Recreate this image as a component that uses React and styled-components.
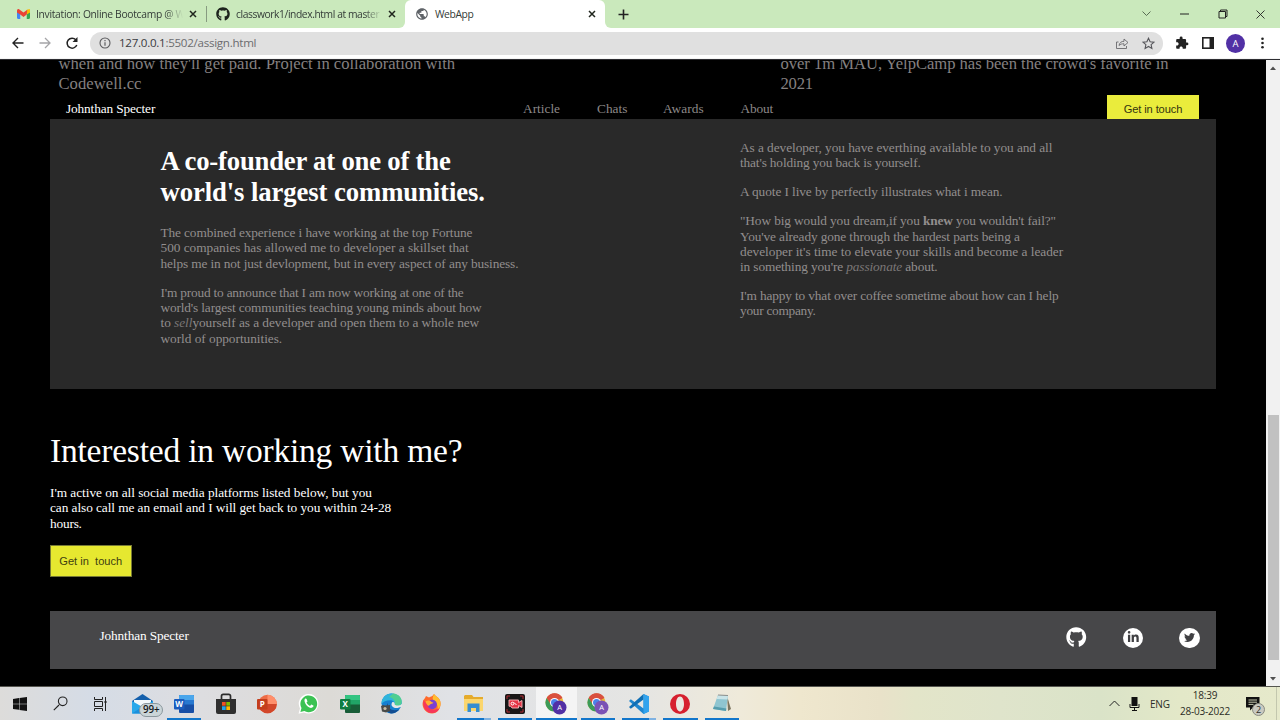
import React from 'react';
import styled, { createGlobalStyle } from 'styled-components';
import { FaGithub, FaLinkedinIn, FaTwitter } from 'react-icons/fa';
import { MdExtension, MdPublic } from 'react-icons/md';

const Global = createGlobalStyle`
  *, *::before, *::after { box-sizing: border-box; }
  body { margin: 0; width: 1280px; height: 720px; overflow: hidden; background: #000; }
  p, h1, h2 { margin: 0; }
  svg { display: block; flex: none; }
`;

const Screen = styled.div`
  width: 1280px;
  height: 720px;
  display: flex;
  flex-direction: column;
  overflow: hidden;
  font-family: 'Open Sans', 'Noto Sans', sans-serif;
`;

/* ---------- browser chrome ---------- */
const TabStrip = styled.div`
  height: 28px;
  display: flex;
  flex: none;
  background: #fff;
`;
const TabSide = styled.div`
  display: flex;
  align-items: center;
  background: #cae9bc;
  width: ${(p) => p.$w}px;
  flex: ${(p) => (p.$w ? 'none' : 1)};
  border-radius: ${(p) => p.$radius};
`;
const Tab = styled.div`
  display: flex;
  align-items: center;
  width: ${(p) => p.$w}px;
  height: 28px;
  flex: none;
  padding-left: ${(p) => p.$pad}px;
  gap: 6px;
`;
const ActiveTabWrap = styled.div`
  background: #cae9bc;
  flex: none;
`;
const ActiveTab = styled(Tab)`
  background: #fff;
  border-radius: 6px 6px 0 0;
`;
const TabTitle = styled.span`
  width: ${(p) => p.$w}px;
  white-space: nowrap;
  font-size: 10.3px;
  line-height: 14px;
  letter-spacing: ${(p) => p.$ls || 0}px;
  color: #343c38;
  mask-image: ${(p) => (p.$fade ? 'linear-gradient(90deg, #000 88%, transparent)' : 'none')};
`;
const TabDivider = styled.i`
  width: 1px;
  height: 16px;
  background: #879b80;
  margin-left: 3px;
`;
const WindowButtons = styled.div`
  display: flex;
  align-items: center;
  margin-left: auto;
  height: 25px;
`;
const WinBtn = styled.span`
  width: 38.2px;
  display: flex;
  justify-content: center;
`;
const Toolbar = styled.div`
  height: 31px;
  flex: none;
  display: flex;
  align-items: center;
  background: #fff;
  padding: 0 11px 0 11px;
  border-bottom: 1px solid #f4f4f4;
`;
const NavIcons = styled.div`
  display: flex;
  gap: 13px;
  width: 79px;
`;
const AddressBar = styled.div`
  width: 1073px;
  height: 23px;
  border-radius: 12px;
  background: #e0e0e0;
  display: flex;
  align-items: center;
  padding: 0 8px 0 9px;
  color: #6c6c6f;
  font-size: 11.6px;
  line-height: 20px;
  letter-spacing: ${(p) => p.$ls}px;
`;
const Url = styled.span`
  margin-left: 8px;
  flex: 1;
  white-space: nowrap;
  b { font-weight: 400; color: #3b3b40; }
`;
const AddressActions = styled.span`
  display: flex;
  gap: 13px;
`;
const ToolbarRight = styled.div`
  flex: none;
  display: flex;
  align-items: center;
  padding-left: 12px;
  gap: 12.5px;
`;
const Avatar = styled.span`
  width: 19px;
  height: 19px;
  border-radius: 50%;
  background: #5130a5;
  color: #fff;
  font-size: 9.5px;
  line-height: 19px;
  text-align: center;
  margin-right: 2px;
`;

/* ---------- web page ---------- */
const Viewport = styled.div`
  flex: 1;
  display: flex;
  min-height: 0;
  background: #000;
  border-top: 1px solid #2d2d31;
`;
const Page = styled.main`
  width: 1266px;
  padding-left: 50px;
  padding-right: 50px;
  font-family: 'Liberation Serif', 'Times New Roman', serif;
  font-size: 13.33px;
  line-height: 15.4px;
  color: #fff;
  overflow: hidden;
`;
const Projects = styled.section`
  display: grid;
  grid-template-columns: 722px 1fr;
  padding-left: 8.5px;
  margin-top: -6px;
  height: 41px;
  font-size: 16.6px;
  line-height: 20px;
  color: #858181;
`;
const Line = styled.span`
  display: block;
  white-space: pre;
  letter-spacing: ${(p) => p.$ls || 0}px;
`;
const Navbar = styled.nav`
  height: 24px;
  display: flex;
  padding-left: 16px;
  padding-right: 17px;
`;
const Brand = styled.span`
  width: ${(p) => p.$w}px;
  padding-top: ${(p) => p.$top || 0}px;
  white-space: nowrap;
  letter-spacing: -0.14px;
`;
const NavLink = styled.a`
  width: ${(p) => p.$w}px;
  padding-top: 6px;
  color: #8c8888;
  white-space: nowrap;
  letter-spacing: ${(p) => p.$ls || 0}px;
`;
const NavButton = styled.button`
  width: 92px;
  height: 24px;
  margin-left: auto;
  padding: 4px 0 0;
  border: 0;
  background: #eaec3c;
  color: #33340f;
  font: 11.1px 'Liberation Sans', Arial, sans-serif;
  letter-spacing: -0.12px;
`;
const About = styled.section`
  height: 270px;
  background: #292929;
  display: grid;
  grid-template-columns: 579.5px 1fr;
  padding-left: 110.5px;
  color: #928e8e;
`;
const Column = styled.div`
  padding-top: ${(p) => p.$top}px;
`;
const Title = styled.h1`
  color: #fff;
  font-size: 26.7px;
  line-height: 31px;
  font-weight: 700;
  margin-bottom: 17px;
`;
const Para = styled.p`
  line-height: 15.33px;
  margin-bottom: 13.6px;
  em { color: #7b7777; }
`;
const Contact = styled.section`
  height: 222px;
  padding-top: 43px;
`;
const ContactTitle = styled.h2`
  font-size: 33.5px;
  line-height: 38px;
  font-weight: 400;
  margin-bottom: 15px;
`;
const ContactButton = styled.button`
  display: block;
  margin-top: 14px;
  width: 81.5px;
  height: 32px;
  padding: 0;
  border: 1.5px solid #777a35;
  background: #e6e830;
  color: #3e4010;
  font: 11.1px 'Liberation Sans', Arial, sans-serif;
  white-space: pre;
`;
const Footer = styled.footer`
  height: 58px;
  background: #474749;
  display: flex;
  justify-content: space-between;
  padding: 16.5px 16.5px 0 49.5px;
`;
const Socials = styled.div`
  display: flex;
  gap: 36.1px;
`;
const Social = styled.span`
  width: 20.4px;
  height: 20.4px;
  display: flex;
  align-items: center;
  justify-content: center;
  border-radius: 50%;
  background: ${(p) => (p.$plain ? 'transparent' : '#fff')};
  color: ${(p) => (p.$plain ? '#fff' : '#3f3f42')};
`;
const Scrollbar = styled.aside`
  width: 14px;
  background: #f1f1f1;
  display: flex;
  flex-direction: column;
  align-items: center;
  padding: 6px 0 5px;
`;
const Thumb = styled.div`
  width: 11px;
  height: 245px;
  margin-top: auto;
  margin-bottom: 17px;
  background: #c1c1c1;
`;

/* ---------- taskbar ---------- */
const Taskbar = styled.div`
  height: 34px;
  flex: none;
  display: flex;
  border-top: 1px solid #55554f;
  background: linear-gradient(90deg, #dddcda 0, #d5dce6 90px, #dddde0 200px, #dcdad6 330px, #e0e2e6 450px, #e5e5e3 640px, #efeada 740px, #efe7ce 800px, #e9e2c9 880px, #e3e5c9 915px, #dfe4cb 1000px, #dae3c8 1100px, #e3e8c8 1180px, #e6e9cb 1280px);
`;
const TaskCell = styled.div`
  position: relative;
  width: ${(p) => p.$w || 41.35}px;
  margin-right: ${(p) => p.$after || 0}px;
  flex: none;
  display: flex;
  align-items: center;
  justify-content: center;
  background: ${(p) => (p.$active ? 'rgba(255,255,255,.6)' : 'transparent')};
`;
const Underline = styled.i`
  position: absolute;
  bottom: 0;
  left: ${(p) => (p.$full ? 0 : 3.5)}px;
  right: ${(p) => (p.$full ? 0 : 3.5)}px;
  height: 2px;
  background: ${(p) => (p.$stack ? 'linear-gradient(90deg, #1276cb 80%, #7fb2e2 80%)' : '#1276cb')};
`;
const CountBadge = styled.span`
  position: absolute;
  left: 17px;
  top: 16px;
  width: 24px;
  height: 14px;
  border: 1px solid #8b979d;
  border-radius: 7px;
  background: #cbd5d8;
  color: #15191c;
  font-size: 9.8px;
  font-weight: 600;
  line-height: 12px;
  text-align: center;
`;
const Tray = styled.div`
  margin-left: auto;
  width: 171px;
  display: flex;
  align-items: center;
  color: #2c2d26;
  font-size: 10px;
`;
const Mic = styled.svg`
  margin-left: 8px;
`;
const Lang = styled.span`
  margin-left: 9px;
  width: 20px;
  letter-spacing: -0.2px;
`;
const Clock = styled.div`
  width: 51px;
  margin-left: 9.5px;
  line-height: 15.4px;
  text-align: center;
  white-space: nowrap;
  letter-spacing: -0.2px;
`;
const Notice = styled.div`
  position: relative;
  margin-left: 15.5px;
  width: 22px;
  height: 14px;
`;
const NoticeCount = styled.span`
  position: absolute;
  left: 6px;
  top: 6px;
  width: 13px;
  height: 13px;
  border: 1px solid #8a8b80;
  border-radius: 50%;
  background: #c9cac2;
  font-size: 9px;
  line-height: 11px;
  text-align: center;
`;
const DesktopEdge = styled.i`
  width: 1px;
  height: 100%;
  margin: 0 3px 0 auto;
  background: #c3c7ae;
`;

/* ---------- drawings ---------- */
const Stroke = ({ w = 12, h = w, vb = `0 0 ${w} ${h}`, d, c = '#222', sw = 1.2 }) => (
  <svg width={w} height={h} viewBox={vb} fill="none" stroke={c} strokeWidth={sw}><path d={d} /></svg>
);
const Close = () => <Stroke w={8} d="M1 1l6 6M7 1l-6 6" sw={1.5} c="#20261e" />;
const Gmail = () => (
  <svg width="13" height="10" viewBox="0 0 24 18">
    <path d="M0 3v13a2 2 0 0 0 2 2h4V7z" fill="#4285f4" />
    <path d="M24 3v13a2 2 0 0 1-2 2h-4V7z" fill="#34a853" />
    <path d="M18 1l4-1a2 2 0 0 1 2 3v3l-6 4z" fill="#fbbc04" />
    <path d="M0 6V3C0 0 3-1 5 1l7 5 7-5-1 9-6 4.500L6 10z" fill="#ea4335" />
  </svg>
);
const Windows = () => (
  <svg width="14" height="14" viewBox="0 0 14 14" fill="#111"><path d="M0 2l6-.9v5.600H0zM6.500 1L14 0v6.700H6.500zM0 7.200h6v5.600L0 12zM6.500 7.200H14V14l-7.500-1z" /></svg>
);
const Mail = () => (
  <svg width="21" height="20" viewBox="0 0 21 20">
    <path d="M0 7L10.500 0 21 7v12H0z" fill="#1560ac" />
    <path d="M2 6h17v8H2z" fill="#f3f8fb" />
    <path d="M0 7l10.500 6L21 7v12.500H0z" fill="#28a8ea" />
    <path d="M0 19.500L13 11l8 8.500z" fill="#1b8fdc" />
  </svg>
);
const Office = ({ letter, base, mid, light, tile, round }) => (
  <svg width="20" height="20" viewBox="0 0 20 20">
    {round ? (
      <g><circle cx="10.500" cy="10" r="9.300" fill={base} /><path d="M10.500.7A9.300 9.300 0 0 1 19.800 10h-9.300z" fill={light} /><path d="M1.200 10h18.600a9.300 9.300 0 0 1-18.600 0z" fill={mid} /></g>
    ) : (
      <g><rect x="5" y="1" width="15" height="18" rx="1" fill={base} /><path d="M5 2a1 1 0 0 1 1-1h13a1 1 0 0 1 1 1v4H5z" fill={light} /><path d="M5 6h15v4.500H5z" fill={mid} /></g>
    )}
    <rect x="0" y="5" width="10.500" height="10.500" rx="1" fill={tile} />
    <text x="5.200" y="13.200" fontSize="8" fontWeight="700" fill="#fff" textAnchor="middle" fontFamily="Open Sans, sans-serif">{letter}</text>
  </svg>
);
const Store = () => (
  <svg width="20" height="21" viewBox="0 0 20 21">
    <path d="M5.500 7V3a1.700 1.700 0 0 1 1.700-1.700h5.600A1.700 1.700 0 0 1 14.500 3v4" fill="none" stroke="#2b2b2b" strokeWidth="1.700" />
    <path d="M0 6h20v13a2 2 0 0 1-2 2H2a2 2 0 0 1-2-2z" fill="#2f2f2f" />
    <path d="M6 9h3.700v3.700H6z" fill="#f05022" /><path d="M10.300 9H14v3.700h-3.700z" fill="#7fba00" />
    <path d="M6 13.300h3.700V17H6z" fill="#20a4ee" /><path d="M10.300 13.300H14V17h-3.700z" fill="#ffb902" />
  </svg>
);
const WhatsApp = () => (
  <svg width="21" height="21" viewBox="0 0 21 21">
    <path d="M.5 20.800l1.500-5.300A9.800 9.800 0 1 1 6 19.400z" fill="#fff" />
    <path d="M2.400 19l1.100-3.900A8.400 8.400 0 1 1 6.300 18z" fill="#3bc253" />
    <path d="M7.300 5.500c-3 2 2.500 10.500 6.500 9.300 2-.7 1.800-2 1.500-2.200l-2-1-1.300 1.300c-1.600-.6-2.800-1.700-3.500-3.300l1-1.200-.9-2.400c-.2-.5-.9-.7-1.300-.5z" fill="#fff" />
  </svg>
);
const Edge = () => (
  <svg width="21" height="21" viewBox="0 0 21 21">
    <circle cx="10.500" cy="10.500" r="10" fill="#1680d0" />
    <path d="M.6 9C2 2 7 .3 11 .5c6 .3 9.800 4.500 9.700 8.500-.2 4.500-5.500 5.500-7.200 3.500 1-3-1.500-5.200-4-5.200C5 7.300 2 9 .6 11z" fill="#2fb4dc" />
    <path d="M12 .5c6 .5 9 4.500 8.700 8.500-.2 4.500-5.500 5.500-7.200 3.500C15 9 13 5 8 4z" fill="#4fce93" />
    <path d="M7 10c-1 5 4 9 11 6.500-2 2.800-5 4-8 4C6 20 4 14 7 10z" fill="#134d91" />
    <path d="M11.500 9c-2.500 3 0 6.500 5 6l4.500-1.500V11c-2 1.800-6 2-7.200.8C14 10 13 8.500 11.500 9z" fill="#e4e7e8" />
    <path d="M0 13l2-1 2 .5 5-.5v6l-4 1.500-4-1z" fill="#494b49" /><circle cx="4" cy="15.500" r="1.600" fill="#c9bda5" />
  </svg>
);
const Firefox = () => (
  <svg width="20" height="20" viewBox="0 0 20 20">
    <path d="M3 4l1-2 3 1.500C9 2.500 11 2 12 0c1 2 4 3 5.500 5.500 3 5-.5 14-7.500 14C3 19.500-1.500 12 1.500 6z" fill="#ff6a2b" />
    <path d="M12 0c1 2 4 3 5.500 5.500 2 4 1 8-2 11 1-5-1-8-4-10C10 5 11 2 12 0z" fill="#ffbd2e" />
    <path d="M1.500 6c-1.300 6 2 13 8 13 4 0 7-2 8-5-4 3-10 2-12-3z" fill="#f7375a" />
    <circle cx="10.300" cy="10.500" r="4.700" fill="#7b3fd0" />
    <path d="M3.500 7.500c2-1.500 5-1 6 .5l2 .8c-1 1.400-3 .8-4 2.200-.5 2-3 0-4-3.500z" fill="#ffae32" />
  </svg>
);
const Folder = () => (
  <svg width="19" height="17" viewBox="0 0 19 17">
    <path d="M1 0h7l1.500 2H19v14H0V1z" fill="#e5ab2c" /><path d="M0 4h19v12H0z" fill="#fbd66d" />
    <path d="M3.500 17V8.500h12V17H12v-4H7v4z" fill="#368dd0" />
  </svg>
);
const Recorder = () => (
  <svg width="20" height="20" viewBox="0 0 20 20">
    <rect width="20" height="20" rx="2" fill="#181717" />
    <path d="M2 5V2h3M15 2h3v3M18 15v3h-3M5 18H2v-3" fill="none" stroke="#b02a33" strokeWidth="1" />
    <path d="M4 6h9.500v2.500L17 6.500v7l-3.500-2V14H7l-1.300-1.800H4z" fill="#e33647" stroke="#f8b8bc" strokeWidth=".9" />
    <circle cx="7.500" cy="9.600" r="1.400" fill="none" stroke="#fff" /><path d="M9 8.500l2.500 2.500" stroke="#fff" />
  </svg>
);
const Chrome = ({ badge = '#5130a5' }) => (
  <svg width="22" height="22" viewBox="0 0 22 22">
    <circle cx="9.500" cy="9.500" r="9" fill="#e9b93c" />
    <path d="M9.500 9.500L1.700 5A9 9 0 0 1 17.300 5z" fill="#d9503f" /><path d="M9.500 5h8a9 9 0 0 0-15.800 0l4 7z" fill="#d9503f" />
    <path d="M1.700 5a9 9 0 0 0 7.800 13.500l3.500-6-7-.5z" fill="#3c9b58" />
    <circle cx="9.500" cy="9.500" r="4.500" fill="#fff" /><circle cx="9.500" cy="9.500" r="3.500" fill="#4a83ea" />
    <circle cx="14.500" cy="14.500" r="7" fill={badge} />
    <text x="14.500" y="17.200" fontSize="7.500" fill="#fff" textAnchor="middle" fontFamily="Open Sans, sans-serif">A</text>
  </svg>
);
const VSCode = () => (
  <svg width="20" height="20" viewBox="0 0 20 20">
    <path d="M14.500 0L20 2.500v15L14.500 20 0 7l1.800-1.800L14.500 14.500z" fill="#1f86cf" />
    <path d="M14.500 0v5.500L1.800 14.800 0 13z" fill="#0f6fb5" /><path d="M14.500 0L20 2.500v15L14.500 20z" fill="#31a3ee" />
  </svg>
);
const Opera = () => (
  <svg width="20" height="20" viewBox="0 0 20 20"><path fillRule="evenodd" d="M10 0a10 10 0 1 1 0 20 10 10 0 0 1 0-20zm0 2.600c-2.500 0-4 3.400-4 7.400s1.500 7.400 4 7.400 4-3.400 4-7.400-1.500-7.400-4-7.400z" fill="#d6202e" /></svg>
);
const Notepad = () => (
  <svg width="20" height="19" viewBox="0 0 20 19">
    <path d="M15 2l4 13-3 2z" fill="#7c755f" /><path d="M6 1l10 .5L14 17 1 15z" fill="#8fc5d0" /><path d="M6 1l10 .5-.5 4L4.500 5z" fill="#c9e4e8" /><path d="M1 15l13 2 .4-2.500L2 12.500z" fill="#569dad" />
    <path d="M6 1l10 .5" stroke="#8d8f8c" strokeWidth="1.200" />
  </svg>
);

const tasks = [
  { icon: <Mail />, count: '99+' },
  { icon: <Office letter="W" base="#174ea6" mid="#2878d0" light="#4aa6ec" tile="#1b5cbe" />, open: true },
  { icon: <Store /> },
  { icon: <Office round letter="P" base="#ed6c47" mid="#d2472a" light="#ff8f6b" tile="#c43e1c" /> },
  { icon: <WhatsApp /> },
  { icon: <Office letter="X" base="#185c37" mid="#21a366" light="#33c481" tile="#107c41" /> },
  { icon: <Edge /> },
  { icon: <Firefox /> },
  { icon: <Folder />, open: true, stack: true },
  { icon: <Recorder />, open: true },
  { icon: <Chrome />, open: true, active: true },
  { icon: <Chrome badge="#7a52b5" />, open: true },
  { icon: <VSCode />, open: true, stack: true },
  { icon: <Opera />, open: true },
  { icon: <Notepad />, open: true },
];

const Browser = () => (
  <>
    <TabStrip>
      <TabSide $w={405} $radius="0 0 6px 0">
        <Tab $w={207} $pad={17}>
          <Gmail /><TabTitle $w={147} $fade $ls={-0.3}>Invitation: Online Bootcamp @ W</TabTitle><Close /><TabDivider />
        </Tab>
        <Tab $w={198} $pad={9}>
          <FaGithub size={14} color="#1d241d" /><TabTitle $w={146} $fade $ls={-0.42}>classwork1/index.html at master</TabTitle><Close />
        </Tab>
      </TabSide>
      <ActiveTabWrap>
        <ActiveTab $w={200} $pad={10}>
          <MdPublic size={14} color="#5f6368" /><TabTitle $w={147} $ls={-0.4}>WebApp</TabTitle><Close />
        </ActiveTab>
      </ActiveTabWrap>
      <TabSide $radius="0 0 0 6px">
        <Tab $w={40} $pad={13}><Stroke w={11} d="M5.500.5v10M.5 5.500h10" sw={1.6} /></Tab>
        <WindowButtons>
          <WinBtn><Stroke w={9} h={6} d="M.5.5l4 4 4-4" sw={0.9} c="#4c5f48" /></WinBtn>
          <WinBtn><Stroke w={9} h={2} d="M0 1h9" sw={1} /></WinBtn>
          <WinBtn><Stroke w={10} d="M1 2.500h6.500V9H1zM2.500 2.500V1H9v6.500H7.500" sw={1} /></WinBtn>
          <WinBtn><Stroke w={9} d="M.5.5l8 8M8.500.5l-8 8" sw={0.9} /></WinBtn>
        </WindowButtons>
      </TabSide>
    </TabStrip>
    <Toolbar>
      <NavIcons>
        <Stroke w={14} d="M12.500 7H2M7 2L2 7l5 5" sw={1.4} />
        <Stroke w={14} d="M1.500 7H12M7 2l5 5-5 5" sw={1.3} c="#a5a5a8" />
        <svg width="14" height="14" viewBox="0 0 14 14"><path d="M11.800 9a5 5 0 1 1-1-5.300" fill="none" stroke="#222" strokeWidth="1.500" /><path d="M12.500 1v5h-5z" fill="#222" /></svg>
      </NavIcons>
      <AddressBar $ls={-0.28}>
        <svg width="12" height="12" viewBox="0 0 12 12" fill="none" stroke="#5c5c5f"><circle cx="6" cy="6" r="5" strokeWidth="1.100" /><path d="M6 5.200v3.500M6 3v1.200" strokeWidth="1.200" /></svg>
        <Url><b>127.0.0.1</b>:5502/assign.html</Url>
        <AddressActions>
          <Stroke w={14} h={13} d="M3.500 5H1.500v6.500h10V9M4 8.500c.5-3 2.500-4.200 5-4.200V2L13 5.500 9 9V6.800C7 6.800 5.500 7 4 8.500z" sw={0.9} c="#6a6a6d" />
          <Stroke w={13} h={13} d="M6.500 1.200l1.600 3.500 3.900.4-2.900 2.600.8 3.800-3.400-2-3.400 2 .8-3.800L1 5.100l3.900-.4z" sw={1.1} c="#55555a" />
        </AddressActions>
      </AddressBar>
      <ToolbarRight>
        <MdExtension size={14} color="#222" />
        <svg width="12" height="12" viewBox="0 0 12 12"><rect x=".8" y=".8" width="10.400" height="10.400" fill="none" stroke="#222" strokeWidth="1.600" /><path d="M7.500 1H11v10H7.500z" fill="#222" /></svg>
        <Avatar>A</Avatar>
        <svg width="5" height="12" viewBox="0 0 5 12" fill="#222"><circle cx="2.500" cy="1.700" r="1.300" /><circle cx="2.500" cy="6" r="1.300" /><circle cx="2.500" cy="10.300" r="1.300" /></svg>
      </ToolbarRight>
    </Toolbar>
  </>
);

const Site = () => (
  <Viewport>
    <Page>
      <Projects>
        <div>
          <Line>when and how they'll get paid. Project in collaboration with</Line>
          <Line $ls={0.05}>Codewell.cc</Line>
        </div>
        <div>
          <Line $ls={-0.03}>over 1m MAU, YelpCamp has been the crowd's favorite in</Line>
          <Line $ls={-0.2}>2021</Line>
        </div>
      </Projects>
      <Navbar>
        <Brand $w={457} $top={6}>Johnthan Specter</Brand>
        <NavLink $w={74}>Article</NavLink>
        <NavLink $w={66}>Chats</NavLink>
        <NavLink $w={77.5} $ls={0.1}>Awards</NavLink>
        <NavLink $w={60} $ls={-0.15}>About</NavLink>
        <NavButton>Get in touch</NavButton>
      </Navbar>
      <About>
        <Column $top={27}>
          <Title>
            <Line $ls={-0.2}>A co-founder at one of the</Line>
            <Line $ls={-0.09}>world's largest communities.</Line>
          </Title>
          <Para>
            <Line $ls={-0.12}>The combined experience i have working at the top Fortune</Line>
            <Line $ls={-0.03}>500 companies has allowed me to developer a skillset that</Line>
            <Line $ls={-0.125}>helps me in not just devlopment, but in every aspect of any business.</Line>
          </Para>
          <Para>
            <Line $ls={-0.195}>I'm proud to announce that I am now working at one of the</Line>
            <Line $ls={-0.15}>world's largest communities teaching young minds about how</Line>
            <Line $ls={-0.05}>to <em>sell</em>yourself as a developer and open them to a whole new</Line>
            <Line $ls={-0.04}>world of opportunities.</Line>
          </Para>
        </Column>
        <Column $top={21}>
          <Para>
            <Line $ls={-0.06}>As a developer, you have everthing available to you and all</Line>
            <Line $ls={-0.15}>that's holding you back is yourself.</Line>
          </Para>
          <Para><Line $ls={-0.09}>A quote I live by perfectly illustrates what i mean.</Line></Para>
          <Para>
            <Line $ls={-0.11}>"How big would you dream,if you <b>knew</b> you wouldn't fail?"</Line>
            <Line $ls={-0.12}>You've already gone through the hardest parts being a</Line>
            <Line $ls={-0.02}>developer it's time to elevate your skills and become a leader</Line>
            <Line $ls={-0.12}>in something you're <em>passionate</em> about.</Line>
          </Para>
          <Para>
            <Line $ls={-0.14}>I'm happy to vhat over coffee sometime about how can I help</Line>
            <Line $ls={-0.27}>your company.</Line>
          </Para>
        </Column>
      </About>
      <Contact>
        <ContactTitle><Line $ls={-0.21}>Interested in working with me?</Line></ContactTitle>
        <Line $ls={-0.045}>I'm active on all social media platforms listed below, but you</Line>
        <Line $ls={-0.07}>can also call me an email and I will get back to you within 24-28</Line>
        <Line $ls={-0.2}>hours.</Line>
        <ContactButton>Get in  touch</ContactButton>
      </Contact>
      <Footer>
        <Brand>Johnthan Specter</Brand>
        <Socials>
          <Social $plain><FaGithub size={20.5} /></Social>
          <Social><FaLinkedinIn size={12.5} /></Social>
          <Social><FaTwitter size={11} /></Social>
        </Socials>
      </Footer>
    </Page>
    <Scrollbar>
      <svg width="6" height="4" viewBox="0 0 6 4"><path d="M0 4l3-3.500L6 4z" fill="#505050" /></svg>
      <Thumb />
      <svg width="6" height="4" viewBox="0 0 6 4"><path d="M0 0l3 3.500L6 0z" fill="#505050" /></svg>
    </Scrollbar>
  </Viewport>
);

export default function App() {
  return (
    <Screen>
      <Global />
      <Browser />
      <Site />
      <Taskbar>
        <TaskCell $w={40}><Windows /></TaskCell>
        <TaskCell $w={40}><Stroke w={15} d="M6 9L.8 14.200M14 5.300a4.300 4.300 0 1 1-8.600 0 4.300 4.300 0 0 1 8.600 0z" sw={1.1} /></TaskCell>
        <TaskCell $w={40} $after={2.3}><Stroke w={15} h={14} d="M1.500 0v2.500h8V0M1.500 4.500h8v5h-8zM1.500 14v-2.500h8V14M12.500 0v14M11 5h3" sw={1} /></TaskCell>
        {tasks.map((t, i) => (
          <TaskCell key={i} $active={t.active}>
            {t.icon}
            {t.count && <CountBadge>{t.count}</CountBadge>}
            {t.open && <Underline $full={t.active} $stack={t.stack} />}
          </TaskCell>
        ))}
        <Tray>
          <Stroke w={11} h={7} d="M.5 6l5-5 5 5" sw={1} />
          <Mic width="13" height="14" viewBox="-5.500 0 13 14"><rect x="-2" y="0" width="6" height="9" fill="#111" /><path d="M-3.500 7v3.500h9V7M1 10.500V13M-1.500 13.500h5" fill="none" stroke="#111" /></Mic>
          <Lang>ENG</Lang>
          <Clock>18:39<br />28-03-2022</Clock>
          <Notice>
            <svg width="14" height="14" viewBox="0 0 14 14"><path d="M0 0h13.500v10.500H7L4 13.500v-3H0z" fill="#111" /><path d="M2.500 3h8.500M2.500 5.200h8.500M2.500 7.400h5" stroke="#d9dcc0" strokeWidth=".9" /></svg>
            <NoticeCount>2</NoticeCount>
          </Notice>
          <DesktopEdge />
        </Tray>
      </Taskbar>
    </Screen>
  );
}
